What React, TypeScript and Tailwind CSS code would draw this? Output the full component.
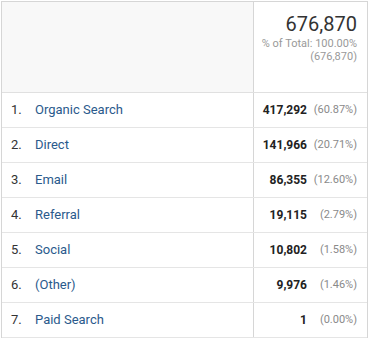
import React from "react";

const rows = [
  { n: "1.", label: "Organic Search", v: "417,292", p: "(60.87%)" },
  { n: "2.", label: "Direct", v: "141,966", p: "(20.71%)" },
  { n: "3.", label: "Email", v: "86,355", p: "(12.60%)" },
  { n: "4.", label: "Referral", v: "19,115", p: "(2.79%)" },
  { n: "5.", label: "Social", v: "10,802", p: "(1.58%)" },
  { n: "6.", label: "(Other)", v: "9,976", p: "(1.46%)" },
  { n: "7.", label: "Paid Search", v: "1", p: "(0.00%)" },
];

export default function App() {
  return (
    <div className="bg-white w-[369px] h-[340px] pt-px pl-px" style={{ fontFamily: "Roboto, 'Liberation Sans', sans-serif" }}>
      <div className="w-[367px] border-l border-t border-r border-[#d6d6d6]">
        <div className="grid grid-cols-[252px_1fr] h-[91px] border-b border-[#e0e0e0]">
          <div className="bg-[#f8f8f8] border-r border-[#d6d6d6]"></div>
          <div className="flex flex-col items-end pr-[10px] pt-[10px]">
            <div className="text-[20px] leading-[25px] text-[#333]">676,870</div>
            <div className="text-[11px] leading-[13px] text-[#999] text-right">
              % of Total: 100.00%
              <br />
              (676,870)
            </div>
          </div>
        </div>
        {rows.map((r) => (
          <div key={r.n} className="grid grid-cols-[252px_1fr] h-[35px] border-b border-[#e5e5e5]">
            <div className="flex items-center border-r border-[#d6d6d6] text-[13px] pl-[9px]">
              <span className="w-[24px] text-[#333]">{r.n}</span>
              <span className="text-[#2a5a8c]">{r.label}</span>
            </div>
            <div className="flex items-center justify-end pr-[10px]">
              <span className="text-[12px] font-bold text-[#222]">{r.v}</span>
              <span className="w-[50px] text-right text-[11px] text-[#8a8a8a]">{r.p}</span>
            </div>
          </div>
        ))}
      </div>
    </div>
  );
}
